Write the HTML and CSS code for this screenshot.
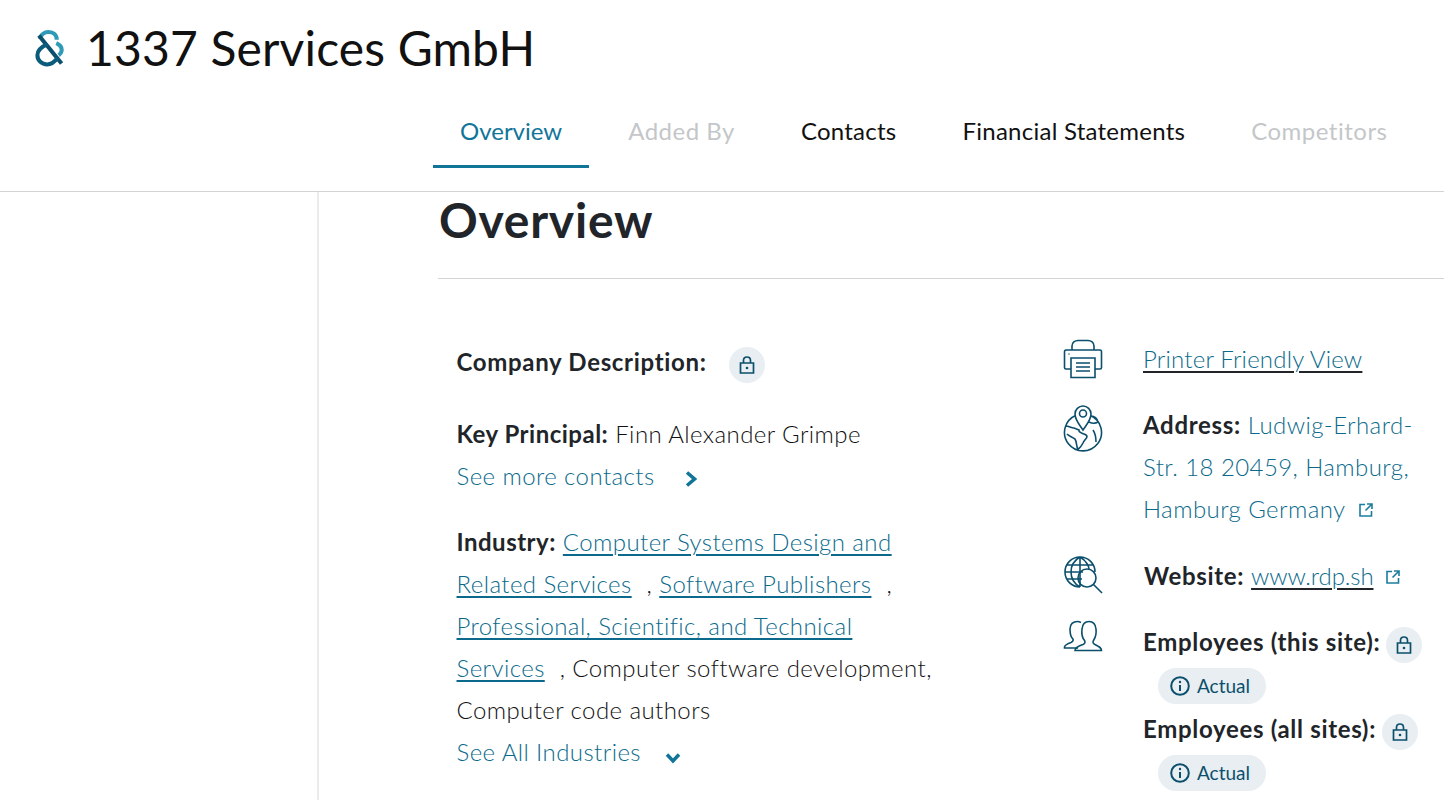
FILE: index.html
```html
<!DOCTYPE html>
<html lang="en">
<head>
<meta charset="utf-8">
<title>1337 Services GmbH</title>
<link rel="stylesheet" href="styles.css">
</head>
<body>
<header class="header">
  <div class="brand">
    <svg class="logo" viewBox="0 0 30 38" fill="none" stroke-width="4.2">
      <path d="M22.500 10.500C22.500 5.500 19 2.500 14 2.500C9.500 2.500 5.500 5.500 5.500 9.500" stroke="#2f9ab8"/>
      <path d="M22 14C26.500 16 28 19 27.500 22C27.200 24 26 25.500 24.500 26.500" stroke="#2f9ab8"/>
      <path d="M4 6L27.500 35" stroke="#0b4f6c"/>
      <path d="M13 15C6 18 2.500 21 2.500 26.500C2.500 32 7 36 12.500 36C17.500 36 20.500 33 23.500 29" stroke="#0b5c7c"/>
    </svg>
    <h1 class="company">1337 Services GmbH</h1>
  </div>
  <nav class="tabs">
    <a class="tab tab-active">Overview</a>
    <a class="tab tab-muted">Added By</a>
    <a class="tab">Contacts</a>
    <a class="tab">Financial Statements</a>
    <a class="tab tab-muted">Competitors</a>
  </nav>
</header>
<div class="page">
  <aside class="sidebar"></aside>
  <main class="main">
    <h2 class="title">Overview</h2>
    <div class="columns">
      <section class="left">
        <div class="desc-row"><b>Company Description:</b><span class="lock lock-desc"><svg class="lock-icon" viewBox="0 0 16 18"><use href="#lock"/></svg></span></div>
        <p class="line"><b>Key Principal:</b> Finn Alexander Grimpe</p>
        <p class="line"><a class="more">See more contacts<svg class="chev chev-right" viewBox="0 0 12 16"><path d="M2 1.500L9.500 8L2 14.500"/></svg></a></p>
        <div class="industry">
          <p class="line"><b>Industry:</b> <a class="u">Computer Systems Design and</a></p>
          <p class="line"><a class="u">Related Services</a><span class="sep"> , </span><a class="u">Software Publishers</a><span class="sep"> ,</span></p>
          <p class="line"><a class="u">Professional, Scientific, and Technical</a></p>
          <p class="line"><a class="u">Services</a><span class="sep"> , </span>Computer software development,</p>
          <p class="line">Computer code authors</p>
        </div>
        <p class="line"><a class="more">See All Industries<svg class="chev chev-down" viewBox="0 0 16 12"><path d="M2 2.500L8 9L14 2.500"/></svg></a></p>
      </section>
      <section class="right">
        <div class="row row-print">
          <svg class="ico" viewBox="0 0 40 40"><path d="M9 11V7C9 3.500 12 1.500 15 1.500H25C28 1.500 31 3.500 31 7V11M8 30H3C2 30 1.500 29.500 1.500 28.500V13C1.500 12 2 11 3 11H37C38 11 38.500 12 38.500 13V28.500C38.500 29.500 38 30 37 30H32M8 19H32V38.500H8ZM13 24H27M13 28H27M13 32H27M5.500 15H6.500"/></svg>
          <div class="txt"><a class="u u-dark">Printer Friendly View</a></div>
        </div>
        <div class="row row-address">
          <svg class="ico ico-globe" viewBox="0 0 40 48"><path d="M12.500 11.500A18.500 18.500 0 1 0 27.500 11.500M20 26C16 20 12 16 12 10A8 8 0 0 1 28 10C28 16 24 20 20 26ZM3 22C6 22 8 24 11 24L16 26C15 29 20 29 23 31C26 33 21 36 20 39C19 41 17 44 15 45.500C13 42 14 38 12 35C9 33 6 32 4 30M28 12C31 12 34 14 35 18C32 20 28 19 26 18M30 26C32 29 33 33 33 38"/><circle cx="20" cy="9.500" r="3.500"/></svg>
          <div class="txt">
            <div><b>Address:</b> <span class="link">Ludwig-Erhard-</span></div>
            <div class="link">Str. 18 20459, Hamburg,</div>
            <div class="link">Hamburg Germany<svg class="ext" viewBox="0 0 16 16"><use href="#ext"/></svg></div>
          </div>
        </div>
        <div class="row row-web">
          <svg class="ico ico-web" viewBox="0 0 40 40"><path d="M17 31A15 15 0 1 1 32 16M17 1C10 5 8 11 8 16C8 22 10 27 17 31M17 1C24 5 26 11 26 13M17 1V31M3 9H30M2 16H20M3 23H19"/><circle cx="24" cy="22" r="9"/><path d="M30.500 28.500L39 37"/></svg>
          <div class="txt txt-web"><b>Website:</b> <a class="u u-dark u-web">www.rdp.sh</a><svg class="ext" viewBox="0 0 16 16"><use href="#ext"/></svg></div>
        </div>
        <div class="row row-emp">
          <svg class="ico ico-people" viewBox="0 0 40 32"><path d="M15 28H1.500V27C1.500 25 4 24 8 22.500C10 21.500 10.500 20.500 10 19C7.500 17 7 13 7 9C7 4 10 1.500 14.500 1.500C16 1.500 17 2 18 2.500"/><path d="M12 30.500C12 27.500 15 26.500 20 24.500C22 23.500 22.500 22 21.500 20.500C19 17.500 18.500 13 19 9C19.500 4 22.500 1.500 26 1.500C29.500 1.500 32.500 4 33 9C33.500 13 32.500 17.500 30.500 20.500C29.500 22 30 23.500 32 24.500C36 26.500 38.500 27.500 38.500 30.500Z"/></svg>
          <div class="txt emp">
            <div class="emp-line"><b>Employees (this site):</b><span class="lock"><svg class="lock-icon" viewBox="0 0 16 18"><use href="#lock"/></svg></span></div>
            <span class="pill"><svg class="info" viewBox="0 0 20 20"><use href="#info"/></svg>Actual</span>
            <div class="emp-line"><b>Employees (all sites):</b><span class="lock"><svg class="lock-icon" viewBox="0 0 16 18"><use href="#lock"/></svg></span></div>
            <span class="pill"><svg class="info" viewBox="0 0 20 20"><use href="#info"/></svg>Actual</span>
          </div>
        </div>
      </section>
    </div>
  </main>
</div>
<svg class="defs" width="0" height="0">
  <symbol id="lock" viewBox="0 0 16 18"><path d="M4.500 7V4.500C4.500 2.500 6 1 8 1C10 1 11.500 2.500 11.500 4.500V7M1.500 7H14.500V17H1.500Z" fill="none" stroke="#0b4f6c" stroke-width="1.700"/><circle cx="8" cy="12" r="1.300" fill="#0b4f6c"/></symbol>
  <symbol id="ext" viewBox="0 0 16 16"><path d="M7 2.500H2V14H13.500V9M7.500 8.500L13.500 2.500M9 2H14V7" fill="none" stroke="#1b7d9e" stroke-width="1.600"/></symbol>
  <symbol id="info" viewBox="0 0 20 20"><circle cx="10" cy="10" r="8.800" fill="none" stroke="#0b4f6c" stroke-width="2"/><path d="M10 9V15" stroke="#0b4f6c" stroke-width="2"/><circle cx="10" cy="6" r="1.200" fill="#0b4f6c"/></symbol>
</svg>
</body>
</html>
```
FILE: styles.css
```css
* { box-sizing: border-box; }
html, body { margin: 0; padding: 0; }
body {
  height: 800px;
  overflow: hidden;
  background: #fff;
  color: #111;
  font-family: Lato, "Open Sans", sans-serif;
  font-size: 24px;
  font-weight: 300;
  line-height: 42px;
  letter-spacing: 0.42px;
}
.header {
  height: 192px;
  border-bottom: 1px solid #d3d3d3;
  display: flex;
  flex-direction: column;
}
.brand {
  display: flex;
  align-items: center;
  height: 100px;
  padding-left: 35px;
}
.logo { width: 29px; height: 38px; margin-right: 22px; margin-top: -4px; }
.company {
  margin: 0;
  font-size: 48px;
  font-weight: 400;
  line-height: 60px;
  margin-top: -4px;
  color: #111;
  letter-spacing: 0.15px;
}
.tabs {
  display: flex;
  padding-left: 433px;
  height: 68px;
}
.tab {
  padding: 10px 27px 0;
  height: 68px;
  color: #111;
  line-height: 42px;
  margin-right: 12px;
  font-weight: 400;
  letter-spacing: 0.25px;
}
.tab-active { color: #11759a; border-bottom: 3px solid #11759a; letter-spacing: 0; }
.tab-muted { color: #c4c7c9; letter-spacing: 0.5px; }
.page { display: flex; height: 608px; }
.sidebar { width: 319px; border-right: 2px solid #ebebeb; flex: none; }
.main { flex: 1; padding-left: 119px; min-width: 0; }
.title {
  margin: 0;
  font-size: 48px;
  font-weight: 700;
  line-height: 56px;
  height: 87px;
  border-bottom: 1px solid #d3d3d3;
  color: #212529;
  padding-left: 1px;
  letter-spacing: 0.75px;
}
.columns { display: flex; }
.left { width: 625px; padding: 62px 0 0 18.500px; flex: none; }
.right { flex: 1; padding-top: 60px; min-width: 0; }
b { font-weight: 700; color: #212529; letter-spacing: 0.68px; }
.line b { letter-spacing: 0.5px; }
.desc-row { display: flex; align-items: center; height: 42px; margin-bottom: 30px; }
.line { margin: 0; white-space: nowrap; }
.industry { margin-top: 24px; }
.more { color: #0b6a8b; }
.link { color: #0b6a8b; }
.u { color: #0b6a8b; text-decoration: underline; text-underline-offset: 3px; text-decoration-thickness: 1.500px; }
.u-dark { text-decoration-color: #212529; letter-spacing: 0.2px; }
.u-web { letter-spacing: -0.1px; }
.sep { margin-left: 8px; }
.lock {
  display: inline-flex;
  align-items: center;
  justify-content: center;
  width: 36px;
  height: 36px;
  border-radius: 50%;
  background: #e8eef2;
  margin-left: 6px;
  margin-top: 5px;
  flex: none;
}
.lock-desc { margin-left: 22px; }
.lock-icon { width: 16px; height: 18px; }
.chev { fill: none; stroke: #11759a; stroke-width: 3.500; }
.chev-right { width: 12px; height: 16px; margin-left: 30px; vertical-align: -2px; }
.chev-down { width: 16px; height: 12px; margin-left: 24px; vertical-align: -3px; }
.row { display: flex; position: relative; }
.ico {
  width: 40px;
  height: 40px;
  flex: none;
  fill: none;
  stroke: #0b4f6c;
  stroke-width: 1.600;
  margin-right: 40px;
}
.ico-globe { height: 48px; }
.ico-people { height: 32px; margin-top: -1px; }
.txt { flex: 1; min-width: 0; }
.row-print { height: 66px; }
.row-address { height: 150px; }
.row-web { height: 66px; }
.txt-web { margin-left: 1px; }
.row-address .ico { margin-top: -1px; }
.row-address .txt { margin-top: -1px; }
.row-web .ico { margin-top: 1px; }
.row-print .txt { margin-top: -1px; }
.ext { width: 16px; height: 16px; margin-left: 12px; vertical-align: 0; }
.emp-line { display: flex; align-items: center; height: 42px; white-space: nowrap; }
.pill {
  display: flex;
  align-items: center;
  width: 108px;
  height: 36px;
  border-radius: 18px;
  background: #e8eef2;
  margin: 5px 0 4px 15px;
  padding-left: 12px;
  font-size: 19px;
  font-weight: 400;
  letter-spacing: 0;
  color: #0b4f6c;
}
.info { width: 20px; height: 20px; margin-right: 7px; }
.defs { position: absolute; }
```
